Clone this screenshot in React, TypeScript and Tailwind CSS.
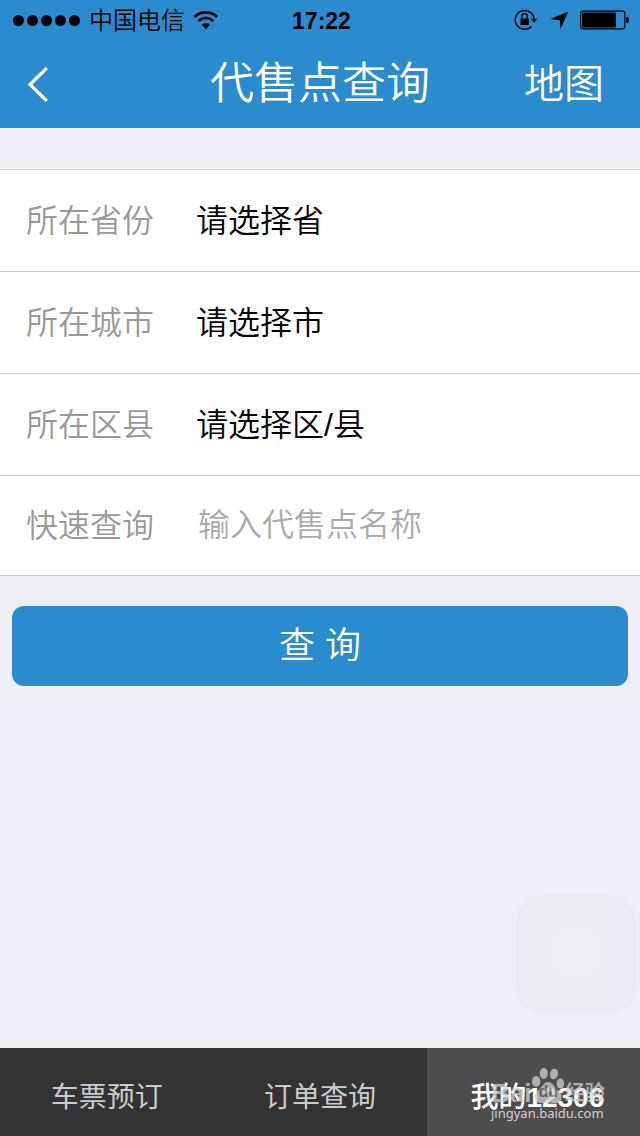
import { useState } from 'react';

const PLACES = [
  { id: 'province', label: '所在省份', placeholder: '请选择省' },
  { id: 'city', label: '所在城市', placeholder: '请选择市' },
  { id: 'district', label: '所在区县', placeholder: '请选择区/县' },
];

function WifiIcon() {
  return (
    <svg width="26" height="20" viewBox="0 0 26 20" fill="none" aria-hidden="true">
      <path d="M1.5 7a16.4 16.4 0 0 1 23 0" stroke="black" strokeWidth="2.8" />
      <path d="M5.4 11.2a10.7 10.7 0 0 1 15.2 0" stroke="black" strokeWidth="2.6" />
      <path d="M8.6 14.9a6.2 6.2 0 0 1 8.8 0L13 19z" fill="black" />
    </svg>
  );
}

function RotationLockIcon() {
  return (
    <svg width="24" height="22" viewBox="0 0 24 22" fill="none" aria-hidden="true">
      <path d="M17.6 17.2A9.4 9.4 0 1 1 20 10" stroke="black" strokeWidth="1.4" />
      <path d="M16.6 9.8h6.8l-3.4 4z" fill="black" />
      <path d="M7.9 10V7.4a2.7 2.7 0 0 1 5.4 0V10" stroke="black" strokeWidth="1.3" />
      <rect x="6.4" y="9.4" width="8.4" height="6.6" rx="0.6" fill="black" />
    </svg>
  );
}

function LocationIcon() {
  return (
    <svg width="18" height="19" viewBox="0 0 18 19" aria-hidden="true">
      <path d="M18 0.8 10.6 18 9.8 9.2 0.4 7.9z" fill="black" />
    </svg>
  );
}

function BatteryIcon() {
  return (
    <svg width="50" height="20" viewBox="0 0 50 20" fill="none" aria-hidden="true">
      <rect x="0.6" y="1.1" width="44.3" height="17.8" rx="2.6" stroke="black" strokeWidth="1.1" />
      <rect x="2" y="2.6" width="34" height="14.8" rx="1.4" fill="black" />
      <path d="M46.2 7h1.2q1.8 0.6 1.8 3t-1.8 3h-1.2z" fill="black" />
    </svg>
  );
}

function StatusBar() {
  return (
    <div className="grid h-10 grid-cols-3 items-center pr-[10px] pl-[13px] text-black">
      <div className="flex items-center">
        <div className="flex gap-[3px]">
          {[0, 1, 2, 3, 4].map((i) => (
            <span key={i} className="h-[11px] w-[11px] rounded-full bg-black" />
          ))}
        </div>
        <span className="mr-2 ml-[9px] pt-[2px] text-2xl font-[350] whitespace-nowrap">中国电信</span>
        <WifiIcon />
      </div>
      <time className="pt-[2px] text-center text-[23px] font-bold">17:22</time>
      <div className="flex items-center justify-end gap-3">
        <RotationLockIcon />
        <LocationIcon />
        <BatteryIcon />
      </div>
    </div>
  );
}

function Watermark() {
  return (
    <div className="pointer-events-none absolute top-[18px] right-[35px] w-[114px] text-[#d0d0d0]">
      <div className="flex h-[38px] items-end justify-between opacity-75">
        <span className="text-[26px] leading-[22px] font-bold">Bai</span>
        <span className="relative flex h-[38px] w-8 items-end justify-center">
          <svg className="absolute inset-0" width="32" height="38" viewBox="0 0 32 38" fill="currentColor" aria-hidden="true">
            <ellipse cx="4.2" cy="15.4" rx="4.2" ry="5.4" />
            <ellipse cx="11.8" cy="7.4" rx="4" ry="5.6" />
            <ellipse cx="22" cy="8" rx="4" ry="5.4" transform="rotate(12 22 8)" />
            <ellipse cx="28.4" cy="17.6" rx="3.8" ry="5" />
            <path d="M16.4 16c-4.2 0-5.6 3.6-8.2 6.4C5.6 25 2.6 27 2.8 31c.2 4 3 6 6.4 6 2.8 0 4.6-.8 7.2-.8s4.4.8 7.2.8c3.4 0 6-2 6-6 0-3.8-3-5.8-5.4-8.4C21.6 19.8 20.4 16 16.4 16z" />
          </svg>
          <span className="relative text-base font-bold text-[#6a6a6a]">du</span>
        </span>
        <span className="text-xl leading-[22px] font-bold whitespace-nowrap">经验</span>
      </div>
      <div className="font-['Noto_Sans',sans-serif] text-[13px] leading-[18px] whitespace-nowrap">jingyan.baidu.com</div>
    </div>
  );
}

export default function App() {
  const [keyword, setKeyword] = useState('');

  return (
    <div className="flex min-h-screen flex-col bg-[#efeef4] font-['Liberation_Sans','Noto_Sans_CJK_SC',sans-serif]">
      <header className="bg-[#2a8ccf] text-white">
        <StatusBar />
        <div className="grid h-[88px] grid-cols-[1fr_auto_1fr] items-center px-6">
          <button type="button" aria-label="返回" className="justify-self-start">
            <svg width="26" height="40" viewBox="0 0 26 40" fill="none" aria-hidden="true">
              <path d="M22.8 4 6 20.5l16.8 16.5" stroke="white" strokeWidth="3.2" />
            </svg>
          </button>
          <h1 className="text-[44px] leading-[80px] font-[350]">代售点查询</h1>
          <button type="button" className="justify-self-end pr-3 text-[40px] leading-[80px] font-[350]">
            地图
          </button>
        </div>
      </header>

      <main className="relative flex-1 pt-10">
        <form onSubmit={(e) => e.preventDefault()}>
          <div className="border-t border-b border-t-white border-b-[#c8c8cc] bg-white">
            {PLACES.map((p) => (
              <div key={p.id} className="flex h-[102px] items-center border-t border-[#c8c8cc] pl-[26px] text-[32px] font-[350]">
                <label htmlFor={p.id} className="w-[170px] shrink-0 text-[#999]">{p.label}</label>
                <select id={p.id} className="h-full min-w-0 flex-1 appearance-none bg-transparent text-black outline-none">
                  <option>{p.placeholder}</option>
                </select>
              </div>
            ))}
            <div className="flex h-[100px] items-center border-t border-[#c8c8cc] pl-[26px] text-[32px] font-[350]">
              <label htmlFor="keyword" className="w-[170px] shrink-0 text-[#999]">快速查询</label>
              <input
                id="keyword"
                type="text"
                value={keyword}
                onChange={(e) => setKeyword(e.target.value)}
                placeholder="输入代售点名称"
                className="h-full min-w-0 flex-1 bg-transparent pl-[2px] text-black outline-none placeholder:text-[#aaa]"
              />
            </div>
          </div>
          <div className="px-3 pt-[30px]">
            <button type="submit" className="h-20 w-full rounded-xl bg-[#2a8ccf] text-4xl font-[350] text-white">
              查 询
            </button>
          </div>
        </form>

        {/* floating assistive button, almost faded out */}
        <button
          type="button"
          aria-label="辅助按钮"
          className="absolute right-1 bottom-[34px] flex h-[120px] w-[120px] items-center justify-center rounded-[28px] bg-[#ebebf0]"
        >
          <span className="flex h-[72px] w-[72px] items-center justify-center rounded-full bg-[#ededf1]">
            <span className="h-14 w-14 rounded-full bg-[#eeedf2]" />
          </span>
        </button>
      </main>

      <nav className="relative grid h-[88px] grid-cols-3 bg-[#333] text-[28px] text-[#ccc]">
        <button type="button" className="pt-3">车票预订</button>
        <button type="button" className="pt-3">订单查询</button>
        <button type="button" aria-current="page" className="bg-[#4d4d4d] pt-3 pl-2 font-medium text-white">
          我的<span className="font-bold">12306</span>
        </button>
        <Watermark />
      </nav>
    </div>
  );
}
